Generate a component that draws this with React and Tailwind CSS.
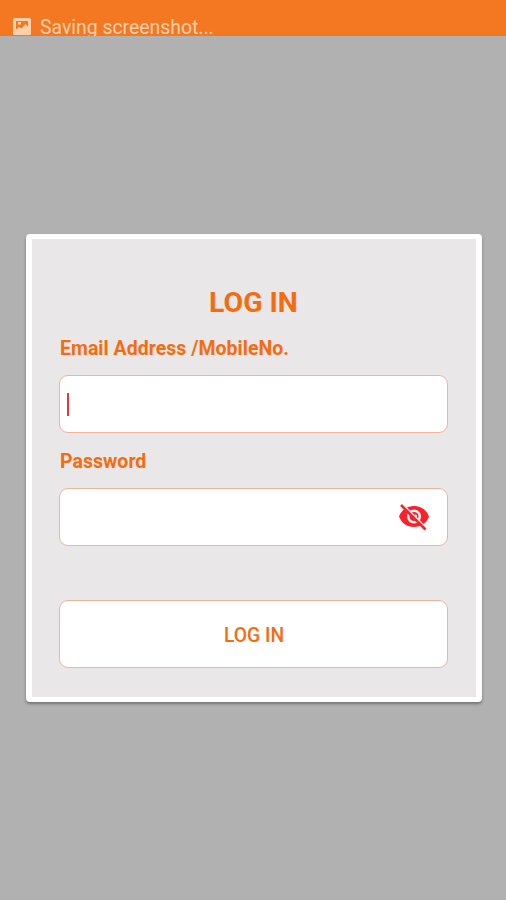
import { useState } from "react";

function StatusBar() {
  return (
    <div className="flex h-9 shrink-0 items-start overflow-hidden bg-[#f47721] pl-[13px] pt-[15px] text-[#fdd0ac]">
      <svg viewBox="0 0 18 18" className="mt-[3px] h-[18px] w-[18px] shrink-0">
        <path fill="currentColor" fillRule="evenodd" d="M1.500 0h15A1.500 1.500 0 0 1 18 1.500v14a1.500 1.500 0 0 1-1.500 1.500h-15A1.500 1.500 0 0 1 0 15.500v-14A1.500 1.500 0 0 1 1.500 0zM3 3v8.500l3-2.500 2.500 1.500L12.500 6 15 9V3z" />
        <path fill="currentColor" d="M5 4h3v2.500H5z" />
      </svg>
      <span className="ml-[9px] whitespace-nowrap pt-px text-[19.400px] leading-6">Saving screenshot...</span>
    </div>
  );
}

function EyeOffIcon() {
  return (
    <svg viewBox="0 0 32 28" className="h-7 w-8">
      <path fill="#fb2029" fillRule="evenodd" d="M1 13.500C3.500 7 9.200 3 16 3s12.500 4 15 10.500C28.500 20 22.800 24 16 24S3.500 20 1 13.500zM16 6.500a7 7 0 1 0 0 14 7 7 0 0 0 0-14z" />
      <circle cx="16" cy="13.500" r="4.600" fill="#fb2029" />
      <circle cx="17.500" cy="13" r="1.600" fill="white" />
      <path stroke="white" strokeWidth="1.600" d="M5 1.500l24 24" />
      <path stroke="#fb2029" strokeWidth="2.600" d="M3 2l24.500 24.500" />
    </svg>
  );
}

function Field({ label, children }) {
  return (
    <div>
      <p className="mb-[14px] pl-px text-[19.500px] font-bold leading-6 tracking-[0.02px]">{label}</p>
      <div className="flex h-[58px] items-center rounded-[9px] border border-[#efb49b] bg-white">{children}</div>
    </div>
  );
}

export default function App() {
  const [hidden, setHidden] = useState(true);

  return (
    <div className="flex h-[900px] w-[506px] flex-col overflow-hidden bg-[#b1b1b1] font-['Roboto','Liberation_Sans',sans-serif]">
      <StatusBar />

      <div className="ml-[26px] mt-[198px] h-[468px] w-[456px] rounded-[4px] border-x-[6px] border-y-[5px] border-white bg-[#e9e7e8] pl-[27px] pr-[28px] pt-[48px] text-[#f56c10] shadow-[0_2px_3px_rgba(0,0,0,0.35)]">
        <h1 className="text-center text-[28.400px] font-bold leading-8">LOG IN</h1>

        <div className="mt-[18px] flex flex-col gap-[17px]">
          <Field label="Email Address /MobileNo.">
            <span className="ml-[7px] h-[23px] w-[2px] bg-[#e5383c]" />
          </Field>
          <Field label="Password">
            <button type="button" onClick={() => setHidden(!hidden)} className="ml-auto mr-[17px]">
              <EyeOffIcon />
            </button>
          </Field>
        </div>

        <button type="button" className="mt-[54px] h-[68px] w-full rounded-[9px] border border-[#efb49b] bg-white pl-px pt-[5px] text-[19.300px] font-medium">
          LOG IN
        </button>
      </div>
    </div>
  );
}
